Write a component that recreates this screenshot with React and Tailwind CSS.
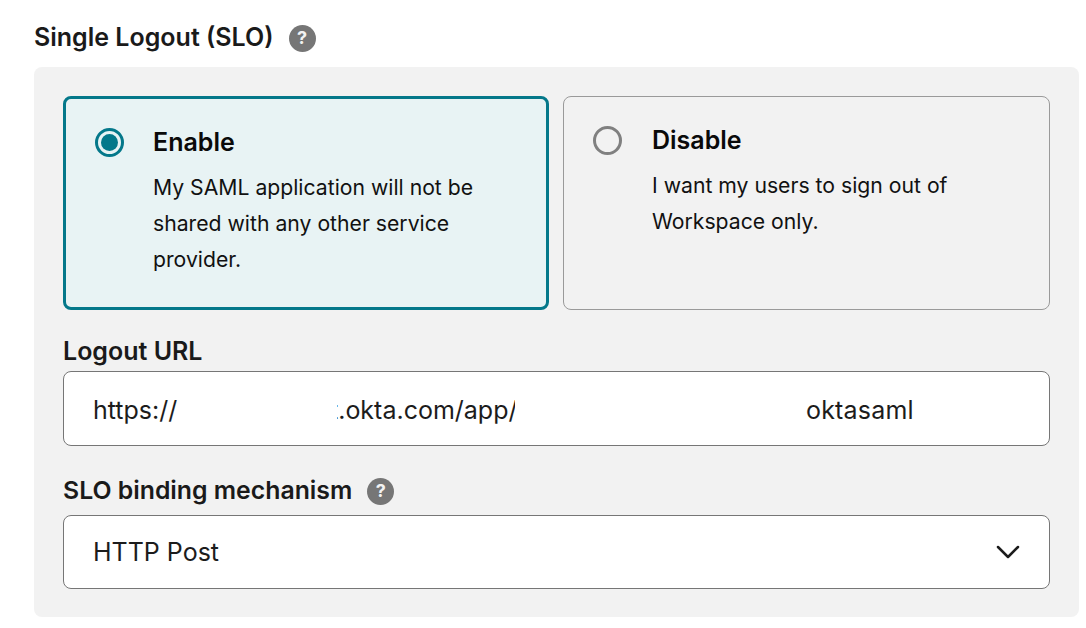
import { ChevronDown } from 'lucide-react'

const FONT = "font-['Inter','Liberation_Sans',sans-serif]"

/* ─────────────── Help badge ─────────────── */

function HelpBadge() {
  return (
    <span className="flex h-[27px] w-[27px] shrink-0 items-center justify-center rounded-full bg-[#767676] text-[18px] leading-none font-bold text-[#f2f2f2]">
      ?
    </span>
  )
}

/* ─────────────── Radio card ─────────────── */

function OptionCard({ title, lines, selected }) {
  return (
    <div
      className={
        selected
          ? 'h-[214px] w-[486px] rounded-lg border-[3px] border-[#04788a] bg-[#e8f3f4] pt-[27px] pl-[29px]'
          : 'h-[214px] w-[487px] rounded-lg border border-[#9a9a9a] bg-[#f2f2f2] pt-[27px] pl-[29px]'
      }
    >
      <div className={selected ? 'flex gap-[29px]' : 'flex gap-[30px]'}>
        {selected ? (
          <span className="mt-[2px] flex h-[29px] w-[29px] shrink-0 items-center justify-center rounded-full border-[3px] border-[#04788a] bg-[#e8f3f4]">
            <span className="h-[17px] w-[17px] rounded-full bg-[#04788a]" />
          </span>
        ) : (
          <span className="mt-[2px] h-[29px] w-[29px] shrink-0 rounded-full border-[3px] border-[#808080]" />
        )}
        <div>
          <div className="text-[25px] leading-[32px] font-semibold text-[#0a0a0a]">{title}</div>
          <div className="mt-[11px] text-[21.2px] leading-[36px] text-[#111111]">
            {lines.map((line) => (
              <div key={line}>{line}</div>
            ))}
          </div>
        </div>
      </div>
    </div>
  )
}

export default function App() {
  return (
    <div className={`${FONT} h-[628px] w-[1086px] overflow-hidden bg-white pl-[34px]`}>
      <div className="flex h-[67px] items-center gap-[15px] pt-[9px] text-[25px] font-semibold text-[#1a1a1a]">
        <span>Single Logout (SLO)</span>
        <HelpBadge />
      </div>

      <div className="h-[550px] w-[1045px] rounded-lg bg-[#f2f2f2] px-[29px] pt-[29px]">
        <div className="flex gap-[14px]">
          <OptionCard
            selected
            title="Enable"
            lines={['My SAML application will not be', 'shared with any other service', 'provider.']}
          />
          <OptionCard
            title="Disable"
            lines={['I want my users to sign out of', 'Workspace only.']}
          />
        </div>

        <div className="mt-[26px] text-[25px] leading-[30px] font-semibold text-[#1a1a1a]">Logout URL</div>
        {/* the middle of the URL is blanked out in the picture, so the pieces are clipped */}
        <div className="mt-[5px] flex h-[75px] w-[987px] items-center rounded-lg border border-[#767676] bg-white pt-[4px] pl-[29px] text-[25px] whitespace-nowrap text-[#1c1c1c]">
          <span className="w-[244px] shrink-0 overflow-hidden">https://</span>
          <span className="w-[178px] shrink-0 overflow-hidden">
            <span className="-ml-[7px] inline-block">t.okta.com/app/c</span>
          </span>
          <span className="ml-[291px] tracking-[0.2px]">oktasaml</span>
        </div>

        <div className="mt-[30px] flex h-[30px] items-center gap-[15px] text-[24.8px] font-semibold text-[#1a1a1a]">
          <span>SLO binding mechanism</span>
          <HelpBadge />
        </div>
        <div className="mt-[9px] flex h-[74px] w-[987px] items-center justify-between rounded-lg border border-[#767676] bg-white pr-[21px] pl-[29px] text-[25px] text-[#1c1c1c]">
          <span className="pt-[2px]">HTTP Post</span>
          <ChevronDown size={40} strokeWidth={1.5} className="text-[#1c1c1c]" />
        </div>
      </div>
    </div>
  )
}
